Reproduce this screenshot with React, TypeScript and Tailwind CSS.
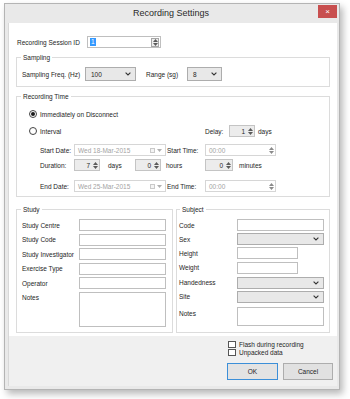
import React from "react";

const Up = ({ c = "#5a5a5a" }: { c?: string }) => (
  <svg width="5" height="3" viewBox="0 0 5 3"><path d="M0 3L2.5 0L5 3Z" fill={c} /></svg>
);
const Down = ({ c = "#5a5a5a" }: { c?: string }) => (
  <svg width="5" height="3" viewBox="0 0 5 3"><path d="M0 0L2.5 3L5 0Z" fill={c} /></svg>
);
const Spin = ({ c }: { c?: string }) => (
  <div className="flex flex-col items-center justify-center gap-[1px] w-[8px] h-full shrink-0">
    <Up c={c} />
    <Down c={c} />
  </div>
);
const Chevron = () => (
  <svg width="6" height="4" viewBox="0 0 6 4">
    <path d="M0.6 0.6L3 3L5.4 0.6" stroke="#333" strokeWidth="1.1" fill="none" />
  </svg>
);

const Select = ({ w, v }: { w: string; v?: string }) => (
  <div className={`flex items-center justify-between h-[14px] ${w} border border-[#adadad] bg-[#e8e8e8] pl-[5px] pr-[4px]`}>
    <span>{v}</span>
    <Chevron />
  </div>
);

const DateBox = ({ v }: { v: string }) => (
  <div className="flex items-center h-[12px] w-[92px] border border-[#d6d6d6] bg-white pl-[3px] pr-[3px] text-[#a3a3a3]">
    <span className="flex-1">{v}</span>
    <div className="w-[5px] h-[5px] border border-[#c9c9c9] bg-[#f4f4f4] mr-[2px]" />
    <Down c="#b0b0b0" />
  </div>
);

const SpinBox = ({ w, v }: { w: string; v: string }) => (
  <div className={`flex items-center justify-end h-[12px] ${w} border border-[#c4c4c4] bg-[#ececec]`}>
    <span className="pr-[1px]">{v}</span>
    <Spin />
  </div>
);

const TimeBox = () => (
  <div className="flex items-center h-[12px] w-[71px] border border-[#d6d6d6] bg-white pl-[3px] text-[#a3a3a3]">
    <span className="flex-1">00:00</span>
    <Spin c="#8a8a8a" />
  </div>
);

const Radio = ({ checked }: { checked?: boolean }) => (
  <div className="w-[8px] h-[8px] rounded-full border border-[#444] bg-white flex items-center justify-center shrink-0">
    {checked && <div className="w-[4px] h-[4px] rounded-full bg-[#1a1a1a]" />}
  </div>
);

const Input = ({ w, h = "h-[12px]" }: { w: string; h?: string }) => (
  <div className={`${w} ${h} border border-[#bfbfbf] bg-white`} />
);

const Checkbox = () => <div className="w-[8px] h-[7px] border border-[#555] bg-white shrink-0" />;

export default function App() {
  return (
    <div className="w-[350px] h-[399px] bg-white pl-[4px] pt-[3px] font-['Liberation_Sans',Arial,sans-serif] text-[6.5px] leading-[9px] text-[#1e1e1e]">
      <div className="w-[336px] h-[387px] border border-[#b4b4b4] bg-[#e9e9e9] shadow-[3px_4px_7px_rgba(0,0,0,0.28)] flex flex-col">
        {/* title bar */}
        <div className="h-[19px] flex items-start shrink-0">
          <div className="flex-1" />
          <div className="text-[9px] leading-[19px] text-[#2a2a2a]">Recording Settings</div>
          <div className="flex-1 flex justify-end pr-[2px] pt-[1px]">
            <div className="w-[19px] h-[13px] bg-[#c84f4f] flex items-center justify-center text-white text-[8px] leading-none">
              ×
            </div>
          </div>
        </div>
        {/* client */}
        <div className="ml-[3px] mr-[2px] flex-1 flex flex-col border-l border-[#d8d8d8]">
          <div className="h-[313px] bg-white px-[7px] flex flex-col">
            {/* session id */}
            <div className="flex items-center mt-[13px] pl-[1px] h-[12px]">
              <span className="w-[70px]">Recording Session ID</span>
              <div className="flex items-center h-[12px] w-[74px] border border-[#bfbfbf] bg-white pl-[2px]">
                <span className="bg-[#3399ff] text-white px-[1px] leading-[8px]">1</span>
                <div className="flex-1" />
                <div className="h-[9px] w-[8px] border border-[#a6a6a6] bg-[#ededed] mr-[1px] flex items-center justify-center">
                  <Spin />
                </div>
              </div>
            </div>

            {/* Sampling */}
            <fieldset className="mt-[5px] border border-[#dcdcdc] px-0 pb-[5px]">
              <legend className="ml-[4px] px-[2px]">Sampling</legend>
              <div className="flex items-center pt-[5px] pl-[5px]">
                <span className="w-[63px]">Sampling Freq. (Hz)</span>
                <Select w="w-[51px]" v="100" />
                <span className="ml-[10px] w-[41px]">Range (sg)</span>
                <Select w="w-[35px]" v="8" />
              </div>
            </fieldset>

            {/* Recording Time */}
            <fieldset className="mt-[5px] border border-[#dcdcdc] pb-[4px]">
              <legend className="ml-[4px] px-[2px]">Recording Time</legend>
              <div className="flex flex-col pt-[8px]">
                <div className="flex items-center h-[10px] pl-[12px]">
                  <Radio checked />
                  <span className="ml-[3px]">Immediately on Disconnect</span>
                </div>
                <div className="flex items-center h-[12px] mt-[6px] pl-[12px]">
                  <div className="w-[176px] flex items-center">
                    <Radio />
                    <span className="ml-[3px]">Interval</span>
                  </div>
                  <span className="w-[24px]">Delay:</span>
                  <SpinBox w="w-[26px]" v="1" />
                  <span className="ml-[3px]">days</span>
                </div>
                <div className="flex items-center h-[12px] mt-[7px] pl-[23px]">
                  <span className="w-[34px]">Start Date:</span>
                  <DateBox v="Wed 18-Mar-2015" />
                  <span className="ml-[1px] w-[38px]">Start Time:</span>
                  <TimeBox />
                </div>
                <div className="flex items-center h-[12px] mt-[3px] pl-[23px]">
                  <span className="w-[34px]">Duration:</span>
                  <SpinBox w="w-[26px]" v="7" />
                  <span className="ml-[8px] w-[27px]">days</span>
                  <SpinBox w="w-[26px]" v="0" />
                  <span className="ml-[5px] w-[39px]">hours</span>
                  <SpinBox w="w-[28px]" v="0" />
                  <span className="ml-[6px]">minutes</span>
                </div>
                <div className="flex items-center h-[12px] mt-[9px] pl-[23px]">
                  <span className="w-[34px]">End Date:</span>
                  <DateBox v="Wed 25-Mar-2015" />
                  <span className="ml-[1px] w-[38px]">End Time:</span>
                  <TimeBox />
                </div>
              </div>
            </fieldset>

            {/* Study / Subject */}
            <div className="flex mt-[8px] gap-[3px]">
              <fieldset className="w-[157px] border border-[#dcdcdc] pb-[5px]">
                <legend className="ml-[4px] px-[2px]">Study</legend>
                <div className="flex flex-col gap-[2.5px] pt-[5px] pl-[5px]">
                  {["Study Centre", "Study Code", "Study Investigator", "Exercise Type", "Operator"].map((l) => (
                    <div key={l} className="flex items-center h-[12px]">
                      <span className="w-[57px]">{l}</span>
                      <Input w="w-[87px]" />
                    </div>
                  ))}
                  <div className="flex items-start">
                    <span className="w-[57px] pt-[1px]">Notes</span>
                    <Input w="w-[87px]" h="h-[35px]" />
                  </div>
                </div>
              </fieldset>
              <fieldset className="flex-1 border border-[#dcdcdc] pb-[5px]">
                <legend className="ml-[3px] px-[2px]">Subject</legend>
                <div className="flex flex-col gap-[2.2px] pt-[5px] pl-[2px]">
                  <div className="flex items-center h-[12px]">
                    <span className="w-[58px]">Code</span>
                    <Input w="w-[87px]" />
                  </div>
                  <div className="flex items-center h-[12px]">
                    <span className="w-[58px]">Sex</span>
                    <div className="flex items-center justify-end h-[12px] w-[87px] border border-[#adadad] bg-[#e8e8e8] pr-[4px]"><Chevron /></div>
                  </div>
                  <div className="flex items-center h-[12px]">
                    <span className="w-[58px]">Height</span>
                    <Input w="w-[61px]" />
                  </div>
                  <div className="flex items-center h-[12px]">
                    <span className="w-[58px]">Weight</span>
                    <Input w="w-[61px]" />
                  </div>
                  <div className="flex items-center h-[12px] mt-[1px]">
                    <span className="w-[58px]">Handedness</span>
                    <div className="flex items-center justify-end h-[12px] w-[87px] border border-[#adadad] bg-[#e8e8e8] pr-[4px]"><Chevron /></div>
                  </div>
                  <div className="flex items-center h-[12px]">
                    <span className="w-[58px]">Site</span>
                    <div className="flex items-center justify-end h-[12px] w-[87px] border border-[#adadad] bg-[#e8e8e8] pr-[4px]"><Chevron /></div>
                  </div>
                  <div className="flex items-start mt-[2px]">
                    <span className="w-[58px] pt-[2px]">Notes</span>
                    <Input w="w-[87px]" h="h-[19px]" />
                  </div>
                </div>
              </fieldset>
            </div>
          </div>

          {/* bottom area */}
          <div className="flex-1 bg-[#f0f0f0] pl-[218px] pt-[5px] flex flex-col">
            <div className="flex items-center h-[7px] pl-[1px]">
              <Checkbox />
              <span className="ml-[3px]">Flash during recording</span>
            </div>
            <div className="flex items-center h-[7px] mt-[1px] pl-[1px]">
              <Checkbox />
              <span className="ml-[3px]">Unpacked data</span>
            </div>
            <div className="flex gap-[5px] mt-[7px]">
              <div className="w-[51px] h-[17px] border border-[#3c8fd8] bg-[#e3e3e3] flex items-center justify-center">OK</div>
              <div className="w-[50px] h-[17px] border border-[#adadad] bg-[#e1e1e1] flex items-center justify-center">Cancel</div>
            </div>
          </div>
        </div>
        <div className="h-[3px] shrink-0" />
      </div>
    </div>
  );
}
